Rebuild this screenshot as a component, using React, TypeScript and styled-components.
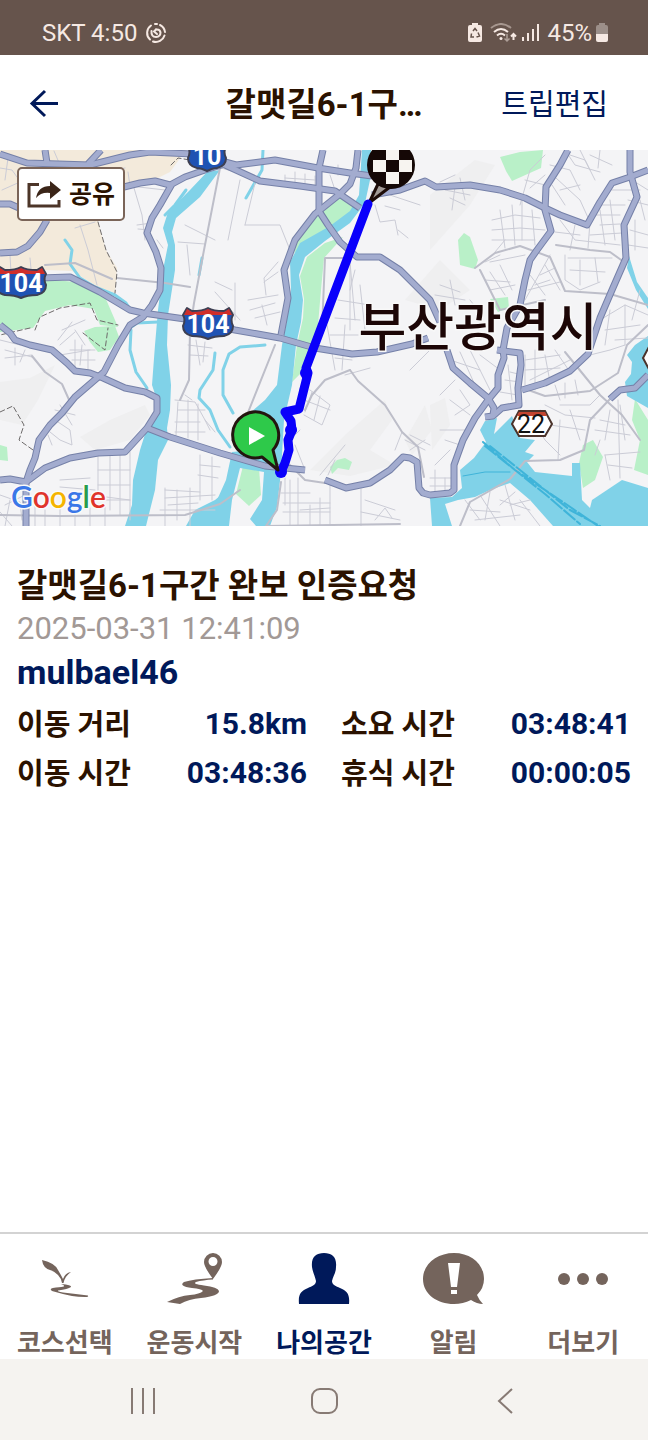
import React from "react";
import styled, { createGlobalStyle } from "styled-components";

const color = {
  brown: "#66544c",
  taupe: "#74645c",
  ink: "#2b1200",
  navy: "#00195a",
  muted: "#a29996",
  status: "#f6e9e3",
};

const GlobalStyle = createGlobalStyle`
  *, *::before, *::after { box-sizing: border-box; }
  body {
    margin: 0;
    background: #fff;
    color: ${color.ink};
    font-family: Roboto, "Noto Sans CJK KR", sans-serif;
  }
  h1, h2, p, dl, dt, dd, ul { margin: 0; padding: 0; }
  button { border: 0; padding: 0; background: none; font: inherit; color: inherit; cursor: pointer; }
  a { color: inherit; text-decoration: none; }
  svg { display: block; }
`;

const Screen = styled.div`
  min-height: 100vh;
  display: flex;
  flex-direction: column;
`;

const StatusBar = styled.div`
  height: 55px;
  padding: 10px 40px 0 42px;
  display: flex;
  align-items: center;
  justify-content: space-between;
  background: ${color.brown};
  color: ${color.status};
  font-size: 24px;
  line-height: 28px;
`;

const StatusGroup = styled.div<{ $gap: number }>`
  display: flex;
  align-items: center;
  gap: ${(p) => p.$gap}px;
`;

const AppBar = styled.header`
  height: 95px;
  padding: 4px 28px 0;
  display: grid;
  grid-template-columns: 1fr auto 1fr;
  align-items: center;
`;

const BackButton = styled.button`
  justify-self: start;
  height: 48px;
`;

const BarTitle = styled.h1`
  font-size: 33px;
  line-height: 48px;
  font-weight: 700;
`;

const EditLink = styled.a`
  justify-self: end;
  margin-right: 12px;
  color: ${color.navy};
  font-size: 29px;
  line-height: 48px;
`;

const MapPanel = styled.section`
  position: relative;
  height: 376px;
  overflow: hidden;
  background: #f4f4f6;
`;

const ShareButton = styled.button`
  position: absolute;
  top: 17px;
  left: 17px;
  height: 54px;
  width: 108px;
  padding-top: 2px;
  display: flex;
  align-items: center;
  justify-content: center;
  gap: 8px;
  border: 2px solid #7a6458;
  border-radius: 5px;
  background: #fff;
  color: ${color.ink};
  font-size: 25px;
  line-height: 32px;
  font-weight: 700;
`;

const Details = styled.main`
  flex: 1;
  padding: 36px 17px;
`;

const TripTitle = styled.h2`
  font-size: 33px;
  line-height: 48px;
  font-weight: 700;
  word-spacing: normal;
`;

const TripDate = styled.p`
  font-size: 31px;
  line-height: 38px;
  color: ${color.muted};
`;

const TripUser = styled.p`
  font-size: 34px;
  line-height: 48px;
  font-weight: 700;
  color: ${color.navy};
`;

const Stats = styled.dl`
  margin-top: 3px;
  display: grid;
  grid-template-columns: 1fr 1fr;
  column-gap: 34px;
`;

const Stat = styled.div`
  height: 49px;
  display: flex;
  align-items: center;
  justify-content: space-between;
  line-height: 36px;
  font-weight: 700;
`;

const StatLabel = styled.dt`
  padding-top: 3px;
  font-size: 29px;
`;

const StatValue = styled.dd`
  font-size: 30px;
  color: ${color.navy};
`;

const TabBar = styled.nav`
  height: 127px;
  border-top: 2px solid #d3d3d3;
  display: grid;
  grid-template-columns: repeat(5, 1fr);
`;

const Tab = styled.button<{ $active?: boolean }>`
  padding-top: 19px;
  display: flex;
  flex-direction: column;
  align-items: center;
  gap: 23px;
  color: ${(p) => (p.$active ? color.navy : color.taupe)};
  font-size: 26px;
  line-height: 32px;
  font-weight: 700;
`;

const SystemBar = styled.div`
  height: 81px;
  padding: 2px 53px 0;
  display: grid;
  grid-template-columns: repeat(3, 1fr);
  place-items: center;
  background: #f5f3f0;
  color: #877a74;
`;

/* ---------- map ---------- */

const RIVERS = [
  "M207 172L190 190L168 212L163 228L168 245L163 270L158 310L155 345L152 385L157 400L157 415L147 428L140 450L133 480L132 505L125 526L146 526L155 490L158 460L168 440L167 428L170 410L171 385L167 345L168 315L175 270L175 245L172 232L176 218L200 197L220 170Z",
  "M362 150L359 195L350 211L330 226L300 243L290 262L291 290L286 325L282 345L277 385L265 400L250 413L252 450L232 452L226 480L217 500L214 526L229 526L232 500L240 468L264 472L262 500L250 519L256 526L270 526L277 507L281 472L284 420L292 385L296 345L301 322L303 300L299 275L305 257L325 241L350 223L365 203L370 180L371 150Z",
  "M232 486L215 500L195 510L186 526L216 526L226 500Z",
  "M485 421L497 418L494 434L512 416L520 438L535 440L525 452L534 455L527 462L535 472L572 476L572 463L580 463L582 500L590 508L592 500L622 480L648 488L648 526L553 526L530 500L510 483L490 490L475 497L458 500L445 504L452 526L432 526L430 498L452 497L462 488L460 470L474 458L486 442L480 430Z",
  "M648 336L635 345L627 355L632 362L631 374L625 382L627 396L634 400L648 408Z",
  "M629 256L637 282L648 298L648 309L636 290L627 268Z",
];

const STREAMS = [
  "M65 240L72 250L70 264L80 278L95 287L115 295L126 303L132 312",
  "M131 330L130 350L136 372L147 388",
  "M265 345L240 347L229 354L223 370L223 395L233 413",
  "M215 353L213 370L200 390L199 398L210 410L218 430L230 447",
  "M130 328L137 323L158 322",
  "M186 190L175 205L165 215",
  "M202 258L199 275",
  "M263 150L262 170L246 198",
];

const GREENS = [
  "M0 284L45 279L75 282L105 297L118 327L100 325L94 309L70 305L45 311L33 328L0 332Z",
  "M84 331L95 327L115 326L119 337L110 350L98 352L90 342Z",
  "M341 197L300 230L294 253L330 227L357 208Z",
  "M343 237L324 258L321 290L318 325L306 368L292 382L297 345L303 318L304 299L300 276L307 257L325 243Z",
  "M243 466L259 468L261 495L249 506L236 494Z",
  "M500 157L520 152L543 150L541 168L512 181L506 171Z",
  "M458 240L464 233L470 237L478 260L475 269L460 265Z",
  "M490 299L508 297L509 308L498 312Z",
  "M330 467L337 460L345 458L352 462L349 470L338 468L332 474Z",
  "M0 445L7 447L8 461L0 460Z",
  "M583 445L593 440L603 457L595 480L583 488L579 463Z",
  "M635 399L648 420L648 475L634 470L640 440L632 420Z",
];

const HILLS = [
  "M430 195L475 160L495 165L470 205L430 250Z",
  "M310 470L345 435L385 400L392 420L370 450L395 465L350 476Z",
  "M405 440L425 405L432 430L412 455Z",
  "M80 437L110 420L145 405L150 415L130 440L95 450Z",
  "M0 382L30 378L55 365L38 400L22 425L0 420Z",
  "M430 405L445 398L450 425L432 450Z",
  "M405 300L440 260L470 290L440 310Z",
];

const ROADS = [
  "M0 154L27 163L90 165L130 155L150 152L192 154",
  "M88 164L101 150",
  "M45 150L47 163",
  "M0 204L10 204L19 208",
  "M0 253L17 252L28 246L40 232L47 220",
  "M124 187L140 183L155 181L170 185",
  "M228 163L205 170L185 177L172 184L160 205L152 218L147 233L156 252L161 268L160 290L152 305L143 317L130 325L118 345L104 372L75 397L62 413L50 425L39 440L35 458L30 470L26 482L26 526",
  "M225 162L236 165L275 160L318 168L350 173L372 176",
  "M225 165L260 181L300 186L335 191L360 208",
  "M323 150L319 168L319 211L328 225L340 242L357 257L380 257L400 270L430 300L440 322",
  "M358 150L356 168L350 184L340 194L315 214L295 240L284 270L288 298L281 335",
  "M40 278L70 277L100 292L130 310L143 313L185 319L235 330L280 338L315 348L352 354L377 352L412 344L428 338",
  "M372 195L400 190L425 181L436 187L470 185L500 190L525 198L545 208L560 215L587 225L600 202L612 183L630 177L648 170",
  "M568 150L560 165L546 187L545 210L551 231L537 250L530 260L525 280L520 305L507 328L503 350L504 358L498 375L498 388L488 400L475 418L463 440L454 465L454 490L450 493L430 495L423 493L419 488L417 462L410 458L403 457L390 470L370 483L346 488L325 480",
  "M630 150L630 172L637 197L624 225L626 258L612 290L600 318L588 354L570 371L545 383L522 390",
  "M497 350L520 353L521 365L518 388L519 405L502 408L493 416L485 417",
  "M447 350L453 368L470 383L488 398L494 408L493 415",
  "M648 375L635 388L620 390L610 399",
  "M0 480L10 479L26 482L45 468L70 458L98 453L125 452L147 428L157 412L157 398L145 392L125 388L103 378L90 373L75 371L67 363L52 350L30 345L15 340L10 333L0 325",
  "M147 428L170 437L220 453L265 466L305 470",
];

const MAJOR_STREETS = [
  "M220 168L204 250L194 303L190 330L189 380L180 400",
  "M117 278L165 283L190 287",
  "M45 265L75 263L112 279",
  "M32 356L45 372L62 384L70 402",
  "M350 258L325 258L322 330L300 390",
  "M275 345L245 420L232 440",
  "M350 370L358 381L385 405L402 432L418 447L424 477",
  "M350 370L325 380L312 395L305 410",
  "M0 515L60 516L185 515L220 504L240 490",
  "M281 482L277 510L266 526L400 524",
  "M545 300L500 310L480 270",
  "M556 245L590 250L610 252L624 262",
  "M475 268L495 253L520 246L550 257L565 291L610 294L648 305",
  "M520 387L545 396L590 391L618 373L627 345L648 325",
  "M565 352L600 395L622 415L640 440",
  "M610 399L590 420L584 450L560 460L525 461L510 479L470 502L460 526",
  "M290 465L305 480L325 483",
];

const MINOR_STREETS = [
  "M0 168L12 170L22 184M8 158L5 180M2 190L20 182M54 151L60 165M128 172L130 186L165 190M90 175L125 168M134 188L142 215L145 240",
  "M80 225L88 250L97 285M75 228L95 222M10 255L12 290M30 258L33 290M137 225L152 223M138 229L150 230M157 240L163 248",
  "M185 225L215 240M178 242L205 244M187 245L190 275M192 160L250 176M245 225L280 225L290 250M240 180L228 240M255 183L245 225",
  "M285 175V185M295 172V188M305 174V188M315 176V190M285 178L315 180M330 175L335 190M338 165V175",
  "M215 282L232 290M235 283V320M215 292L240 320M250 310L275 303M255 318L280 312M262 305L267 325M248 300L278 295M278 262L264 278L266 295M264 282L278 272",
  "M350 260V330M338 300L370 305M335 318L360 320M355 270L350 290M360 285L365 330M330 350L358 354M335 358L352 360M330 335H358M327 325L335 370M345 325L342 370M350 262L355 320",
  "M375 205L380 222L395 220L398 235M400 210L385 206M398 230L408 238M390 195L420 205",
  "M310 390L330 405L322 425L304 415M304 400L330 410M312 392L305 412M320 396L314 420M295 445L305 470M300 430L290 440M320 475L345 445M335 460L328 475",
  "M285 478V505M290 480V526M298 478V526M310 505V526M281 493H310M283 503H330M283 512H330M320 498V526M330 480V526M300 510L330 508M361 489V526M361 512L400 520M365 500L395 510M375 520L385 508L392 518",
  "M98 455V500M110 452V510M120 455V515M130 452V520M98 470H130M98 485H130M98 500H130M90 495L130 500M60 480L90 478M60 487L95 490",
  "M165 488V526M177 490V520M190 488V526M200 455V500M212 457V500M165 498L215 495M160 510H215M200 465L220 467M198 475L218 478M165 490L200 492M168 505L198 503",
  "M175 400L195 402L205 420L215 432M178 410H205M175 422H200M175 432H205M178 402L176 435M188 400V438M198 404V440M185 395L192 400M205 420L210 430",
  "M188 345L212 348M190 355L208 356M196 340L200 365M205 342L203 362",
  "M75 340V368M82 345L80 365M88 350V370M70 350H95M72 360H95M60 355L90 350M75 330L85 345M60 345L75 332M62 330L85 320M58 340L72 322",
  "M0 340L20 345M5 350L32 357M5 358L32 355M15 348V365M25 350L20 362",
  "M55 420L70 430L72 445L60 440L50 432M55 410L75 415M60 405L72 425M48 435L52 445",
  "M0 495L20 502L22 520M5 505L25 495M0 512L12 526M10 500L5 526M35 500V526M45 510V526M60 508V526M75 510V526M90 508V526M105 506V526",
  "M440 182L455 175M445 190L470 195M450 198L465 205M455 187L452 210M460 178L465 200",
  "M545 155L530 170L520 205M550 165L570 170L580 190M556 178L580 200L590 222M565 150L575 165L600 172M570 155L585 160L595 180M580 150L590 170M590 155L612 165M600 150L598 168M545 175L530 188M552 185L565 205M560 190L580 185M525 180L545 185",
  "M492 220L515 215L540 218M492 230L520 228L545 230M492 240H535M500 210L505 248M512 205L515 245M522 200V240M532 210L535 245M495 252L505 240M485 262L500 255",
  "M560 220L575 240L620 245M555 232L580 235M575 225L570 250M590 222L588 248M600 210L605 245M610 200L615 240M590 215L620 215M595 205L625 205M590 235L622 233M600 225L620 224M612 190L640 190M628 200L648 205M632 180L648 190M640 200L645 220M630 230L648 235M635 220V250M628 245L648 248",
  "M565 255V280L580 290L600 282M568 258H612M570 270L605 272M580 260V285M595 258L598 282M545 265L560 290M540 275L555 268M535 285L550 280M530 275L545 295M528 290L560 282M550 255L525 300M525 255L490 262",
  "M485 280L510 282M490 290L515 285M490 272L505 295M500 265L512 290M440 285L460 292M435 295L465 300M450 280L455 305M470 300L478 310",
  "M600 320L625 305L648 315M625 305V345M605 330L640 325M610 310L605 345M640 290L632 320M615 340L648 338M590 355L610 350L625 345",
  "M525 355V385M535 350V390M545 355L550 382M525 360L560 355M525 370L560 368M530 380L570 360M555 350L570 372M510 372L522 375M505 380L520 382M500 392L518 395M508 365L512 400",
  "M450 360L480 370M460 352L475 385M470 350L490 390M480 355L500 370M455 380L440 395M460 390L470 405L455 415M450 400L470 415M440 430L465 430M445 440L460 445M450 450L435 465M430 478L452 478M435 470V492M445 478V492M430 486H452",
  "M555 385L560 400M565 383V398M575 380L578 395M560 405L590 405L600 395M530 415L545 440L560 455M560 420L558 460M550 425L585 430M545 405L565 415L595 418M540 410L530 425M570 410L580 440M600 420L625 425M610 410L605 440M595 430L630 435M600 440L595 455M620 405L625 440",
  "M618 400L620 478M605 455L640 452M608 465L632 468M610 480L605 455",
  "M480 495L500 526M490 492L485 520M505 485L515 520M515 492L500 505M520 500L540 526M470 510L500 512M475 520L520 515M500 500L530 510M465 500L480 520M510 505L530 500",
  "M410 370L430 350M345 375L370 368M402 432L395 450M405 440L425 450M410 435L430 445M410 450L425 440",
];

const BORDERS = "M98 222L106 250L117 272L115 293M171 165L178 158L190 160M35 330L40 317L60 308L90 303L97 320L118 325M83 333L105 350L108 328M0 412L13 406L24 425L19 440L33 450M30 328L0 335";

const Shield = ({ x, y, label, width = 50 }: { x: number; y: number; label: string; width?: number }) => (
  <g transform={`translate(${x} ${y})`}>
    <path
      d={`M4 1L9 4Q${width / 2 - 5} 4 ${width / 2} 1Q${width / 2 + 5} 4 ${width - 9} 4L${width - 4} 1L${width} 8Q${width - 3} 13 ${width} 19Q${width} 27 ${width - 9} 29Q${width / 2 + 6} 29 ${width / 2} 32Q${width / 2 - 6} 29 9 29Q0 27 0 19Q3 13 0 8Z`}
      fill="#1f52b3" stroke="#3d3f52" strokeWidth="2" strokeLinejoin="round"
    />
    <path
      d={`M4 2L9 5Q${width / 2 - 5} 5 ${width / 2} 2Q${width / 2 + 5} 5 ${width - 9} 5L${width - 4} 2L${width - 1} 8H1Z`}
      fill="#cf2e2a"
    />
    <text x={width / 2} y="26" textAnchor="middle" fontSize="25" fontWeight="700" fill="#fff">{label}</text>
  </g>
);

const RouteMap = () => (
  <svg width="100%" height="376" viewBox="0 150 648 376" preserveAspectRatio="xMidYMid slice" role="img" aria-label="이동 경로 지도">
    <rect y="150" width="648" height="376" fill="#f4f4f6" />
    <path d="M0 150H186L170 172L150 182L124 186L98 222L106 250L117 268L115 293L98 287L72 271L45 270L0 274Z" fill="#f3eadb" />
    <path d="M0 298Q13 302 13 313Q8 324 0 326Z" fill="#f3dfcf" />
    {HILLS.map((d) => <path key={d} d={d} fill="#efeff0" />)}
    {GREENS.map((d) => <path key={d} d={d} fill="#b9f0c8" />)}
    {RIVERS.map((d) => <path key={d} d={d} fill="#80d2e8" />)}
    <g fill="none" strokeLinejoin="round" strokeLinecap="round">
      {STREAMS.map((d) => <path key={d} d={d} stroke="#80d2e8" strokeWidth="3" />)}
      {MINOR_STREETS.map((d) => <path key={d} d={d} stroke="#cbccd6" strokeWidth="1" />)}
      {MAJOR_STREETS.map((d) => <path key={d} d={d} stroke="#bdbec9" strokeWidth="2" />)}
      <path d={BORDERS} stroke="#6d6a6a" strokeWidth="1" strokeDasharray="5 3" />
      <path d="M483 442L515 470L560 500L598 526M485 446L545 494L580 524M490 446L570 510L600 526" stroke="#3fb4d9" strokeWidth="2" strokeDasharray="14 3" />
      <path d="M463 476L485 472L510 472" stroke="#3fb4d9" strokeWidth="1" />
      {ROADS.map((d) => <path key={d} d={d} stroke="#7580a8" strokeWidth="7" strokeLinecap="butt" />)}
      {ROADS.map((d) => <path key={d} d={d} stroke="#a3accf" strokeWidth="5" strokeLinecap="butt" />)}
    </g>
    <Shield x={-4} y={266} label="104" />
    <Shield x={183} y={307} label="104" />
    <Shield x={188} y={139} label="10" width={38} />
    <path d="M519 411H545L552 424L545 436H519L512 424Z" fill="#fff" stroke="#4b332b" strokeWidth="2" />
    <path d="M519 412H545L547 416H517Z" fill="#c2452f" />
    <text x="531" y="433" textAnchor="middle" fontSize="25" fill="#111">22</text>
    <path d="M650 345L643 358L650 371" fill="#fff" stroke="#4b332b" strokeWidth="2" />
    <text x="478" y="346" textAnchor="middle" fontSize="52" fontWeight="500" fill="#1c0606" stroke="#f8f8f8" strokeWidth="3" paintOrder="stroke">부산광역시</text>
    <g>
      <path d="M369 203L378 184L390 187Z" fill="#a39a96" stroke="#1e0c08" strokeWidth="3" strokeLinejoin="round" />
      <circle cx="391" cy="165" r="24" fill="#150806" />
      <path d="M386 149H399V160H386ZM373 160H386V172H373ZM399 160H412V172H399ZM386 172H399V184H386Z" fill="#f7f4f0" />
    </g>
    <path d="M368 204L306 368L308 373L299 409L285 412L291 421L292 430L288 440L289 450L285 463L281 472" fill="none" stroke="#0a00fb" strokeWidth="9" strokeLinecap="round" strokeLinejoin="round" />
    <circle cx="306" cy="373" r="6" fill="#0a00fb" />
    <circle cx="291" cy="430" r="6" fill="#0a00fb" />
    <circle cx="281" cy="472" r="6" fill="#0a00fb" />
    <path d="M278 470L262 457A23 23 0 1 1 273 450Z" fill="#2ec94a" stroke="#23150f" strokeWidth="3" strokeLinejoin="round" />
    <path d="M249 427L265 436L249 445Z" fill="#fff" />
    <text x="11" y="508" fontFamily="Lato, Roboto, sans-serif" fontSize="30" fontWeight="600" stroke="#fafafa" strokeWidth="3" paintOrder="stroke">
      <tspan fill="#3a77e8">G</tspan><tspan fill="#e0342b">o</tspan><tspan fill="#f5b400">o</tspan><tspan fill="#3a77e8">g</tspan><tspan fill="#2a9c4b">l</tspan><tspan fill="#e0342b">e</tspan>
    </text>
  </svg>
);

/* ---------- icons ---------- */

const SyncIcon = () => (
  <svg width="22" height="22" viewBox="0 0 22 22" fill="none" stroke="currentColor" strokeWidth="2" strokeLinecap="round" aria-hidden="true">
    <path d="M6 3.500A9 9 0 0 0 5 17.500M8 19.500A9 9 0 0 0 19.500 13.500M20 10A9 9 0 0 0 15 3M12 2H10" />
    <path d="M6.500 9Q6 15 11 15Q15.500 14.500 15.500 10.500Q15 7 11 7.500" />
    <path d="M11 7.500L9 9.500L12 12" />
  </svg>
);

const RecycleBatteryIcon = () => (
  <svg width="14" height="20" viewBox="0 0 14 20" aria-hidden="true">
    <path d="M4 0H10V2H12Q14 2 14 4V17Q14 19 12 19H2Q0 19 0 17V4Q0 2 2 2H4Z" fill="currentColor" />
    <path d="M5 8L7 5.500L9 8M10 9.500L11.500 13L8.500 14M6 14H3L3.500 10.500" fill="none" stroke={color.brown} strokeWidth="1.500" />
  </svg>
);

const WifiIcon = () => (
  <svg width="27" height="20" viewBox="0 0 27 20" fill="none" stroke="currentColor" strokeWidth="2" aria-hidden="true">
    <path d="M1 5Q11 -3 21 5" opacity=".45" />
    <path d="M4 9Q11 3 18 9M7 12.500Q11 9 15 12.500" />
    <circle cx="11" cy="15.500" r="1.500" fill="currentColor" stroke="none" />
    <path d="M17 11V18M14.500 15.500L17 18L19.500 15.500" opacity=".5" strokeWidth="1.500" />
    <path d="M23.500 17V11M21 13.500L23.500 11L26 13.500" />
  </svg>
);

const SignalIcon = () => (
  <svg width="17" height="18" viewBox="0 0 17 18" fill="currentColor" aria-hidden="true">
    <path d="M0 13H2V17H0ZM5 9H7V17H5ZM10 5H12V17H10ZM15 0H17V17H15Z" />
  </svg>
);

const BatteryIcon = () => (
  <svg width="12" height="20" viewBox="0 0 12 20" aria-hidden="true">
    <path d="M3 0H9V2H10Q12 2 12 4V11H0V4Q0 2 2 2H3Z" fill="#9c8f89" />
    <path d="M0 11H12V17Q12 19 10 19H2Q0 19 0 17Z" fill="currentColor" />
  </svg>
);

const BackArrowIcon = () => (
  <svg width="32" height="48" viewBox="0 0 32 48" fill="none" stroke={color.navy} strokeWidth="3" aria-hidden="true">
    <path d="M30 22.500H4M17 10L4 22.500L17 35" />
  </svg>
);

const ShareIcon = () => (
  <svg width="34" height="28" viewBox="0 0 34 28" aria-hidden="true">
    <path d="M12 3.500H2V25H32V19" fill="none" stroke="#4c3528" strokeWidth="3" />
    <path d="M9 17Q11 5 23 5V0L34 9L23 18V12Q14 11 9 17Z" fill="#3b2518" />
  </svg>
);

const CourseIcon = () => (
  <svg width="64" height="51" viewBox="0 0 64 51" fill="currentColor" aria-hidden="true">
    <path d="M9 7Q22 10 25 17Q28 22 30 26Q32 20 38 19Q32 23 30.500 30L29 30Q28 25 25 22Q21 18 17 17Q10 15 9 7Z" />
    <path d="M28 31Q39 32 38 34Q35 36 25 37.500Q24 38.500 30 39.500Q43 41 55 42.500Q56 44 52 44Q45 44 39 43Q29 41 19 38Q15 35 23 34.500Q36 34 28 31Z" />
  </svg>
);

const StartIcon = () => (
  <svg width="64" height="51" viewBox="0 0 64 51" fill="currentColor" aria-hidden="true">
    <path fillRule="evenodd" d="M51 0A9 9 0 0 1 60 9Q60 14 51 26Q42 14 42 9A9 9 0 0 1 51 0ZM51 4A4.500 4.500 0 1 0 51 13A4.500 4.500 0 1 0 51 4Z" />
    <path d="M51 25Q31 26 22 29Q16 33 30 35Q40 36 41 38Q38 41 28 42Q17 43 5 49L18 51Q27 46 39 45Q57 43 57 38Q56 34 42 32.500Q30 31 34 29Q41 27 51 26.500Z" />
  </svg>
);

const PersonIcon = () => (
  <svg width="52" height="51" viewBox="0 0 52 51" fill="currentColor" aria-hidden="true">
    <path d="M26 0C34 0 39 4 38 14C38 20 35 23 34 28C34 32 38 33 42 35C49 38 52 41 51 51H1C0 41 3 38 10 35C14 33 18 32 18 28C17 23 15 20 14 14C13 4 18 0 26 0Z" />
  </svg>
);

const AlertIcon = () => (
  <svg width="62" height="51" viewBox="0 0 62 51" aria-hidden="true">
    <path d="M31 0C48 0 61 11 61 26Q61 35 54 42Q56 47 60 51Q54 51 48 47Q40 51 31 51C14 51 0 41 0 26S14 0 31 0Z" fill="currentColor" />
    <path d="M25 10H37L34 34H28ZM28 37H34V41H28Z" fill="#fff" />
  </svg>
);

const MoreIcon = () => (
  <svg width="50" height="51" viewBox="0 0 50 51" fill="currentColor" aria-hidden="true">
    <circle cx="6" cy="26" r="6" /><circle cx="25" cy="26" r="6" /><circle cx="44" cy="26" r="6" />
  </svg>
);

const stats = [
  ["이동 거리", "15.8km"],
  ["소요 시간", "03:48:41"],
  ["이동 시간", "03:48:36"],
  ["휴식 시간", "00:00:05"],
];

const tabs = [
  { label: "코스선택", Icon: CourseIcon },
  { label: "운동시작", Icon: StartIcon },
  { label: "나의공간", Icon: PersonIcon, active: true },
  { label: "알림", Icon: AlertIcon },
  { label: "더보기", Icon: MoreIcon },
];

export default function App() {
  return (
    <Screen>
      <GlobalStyle />
      <StatusBar>
        <StatusGroup $gap={8}>
          <span>SKT 4:50</span>
          <SyncIcon />
        </StatusGroup>
        <StatusGroup $gap={4}>
          <StatusGroup $gap={8}>
            <RecycleBatteryIcon />
            <StatusGroup $gap={5}>
              <WifiIcon />
              <SignalIcon />
            </StatusGroup>
            <span>45%</span>
          </StatusGroup>
          <BatteryIcon />
        </StatusGroup>
      </StatusBar>
      <AppBar>
        <BackButton aria-label="뒤로"><BackArrowIcon /></BackButton>
        <BarTitle>갈맷길6-1구…</BarTitle>
        <EditLink href="#edit">트립편집</EditLink>
      </AppBar>
      <MapPanel>
        <RouteMap />
        <ShareButton><ShareIcon />공유</ShareButton>
      </MapPanel>
      <Details>
        <TripTitle>갈맷길6-1구간 완보 인증요청</TripTitle>
        <TripDate>2025-03-31 12:41:09</TripDate>
        <TripUser>mulbael46</TripUser>
        <Stats>
          {stats.map(([label, value]) => (
            <Stat key={label}>
              <StatLabel>{label}</StatLabel>
              <StatValue>{value}</StatValue>
            </Stat>
          ))}
        </Stats>
      </Details>
      <TabBar>
        {tabs.map(({ label, Icon, active }) => (
          <Tab key={label} $active={active} aria-current={active ? "page" : undefined}>
            <Icon />
            {label}
          </Tab>
        ))}
      </TabBar>
      <SystemBar>
        <button aria-label="최근 앱">
          <svg width="26" height="28" viewBox="0 0 26 28" stroke="currentColor" strokeWidth="2"><path d="M2 1V27M13 1V27M24 1V27" /></svg>
        </button>
        <button aria-label="홈">
          <svg width="28" height="28" viewBox="0 0 28 28" fill="none" stroke="currentColor" strokeWidth="2"><rect x="2" y="2" width="25" height="24" rx="8" /></svg>
        </button>
        <button aria-label="이전">
          <svg width="16" height="28" viewBox="0 0 16 28" fill="none" stroke="currentColor" strokeWidth="2"><path d="M15 2L2 14L15 26" /></svg>
        </button>
      </SystemBar>
    </Screen>
  );
}
